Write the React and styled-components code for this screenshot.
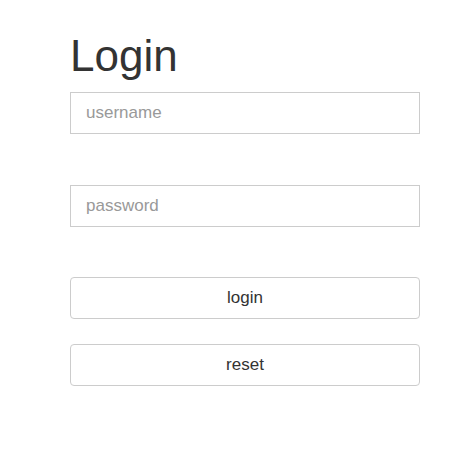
import React from "react";
import styled, { createGlobalStyle } from "styled-components";

const Global = createGlobalStyle`
  html, body { margin: 0; padding: 0; background: #fff; }
  body { font-family: "Liberation Sans", Arial, sans-serif; color: #333; }
`;

const Page = styled.div`
  width: 475px;
  height: 461px;
  box-sizing: border-box;
  padding: 28px 0 0 70px;
`;

const Form = styled.form`
  width: 350px;
  display: flex;
  flex-direction: column;
`;

const Title = styled.h1`
  margin: 0 0 8px;
  font-size: 44px;
  font-weight: 400;
  line-height: 56px;
  color: #333;
`;

const Input = styled.input`
  box-sizing: border-box;
  height: 42px;
  width: 100%;
  margin-bottom: ${(p) => p.$gap}px;
  padding: 0 15px;
  border: 1px solid #ccc;
  border-radius: 0;
  font-family: "Liberation Sans", Arial, sans-serif;
  font-size: 17px;
  color: #333;
  outline: none;
  &::placeholder { color: #999; }
`;

const Button = styled.button`
  box-sizing: border-box;
  height: 42px;
  width: 100%;
  margin-bottom: ${(p) => p.$gap}px;
  border: 1px solid #ccc;
  border-radius: 4px;
  background: #fff;
  font-family: "Liberation Sans", Arial, sans-serif;
  font-size: 17px;
  color: #333;
  cursor: pointer;
`;

export default function App() {
  return (
    <>
      <Global />
      <Page>
        <Form onSubmit={(e) => e.preventDefault()}>
          <Title>Login</Title>
          <Input $gap={51} placeholder="username" />
          <Input $gap={50} type="password" placeholder="password" />
          <Button $gap={25} type="submit">login</Button>
          <Button $gap={0} type="button">reset</Button>
        </Form>
      </Page>
    </>
  );
}
